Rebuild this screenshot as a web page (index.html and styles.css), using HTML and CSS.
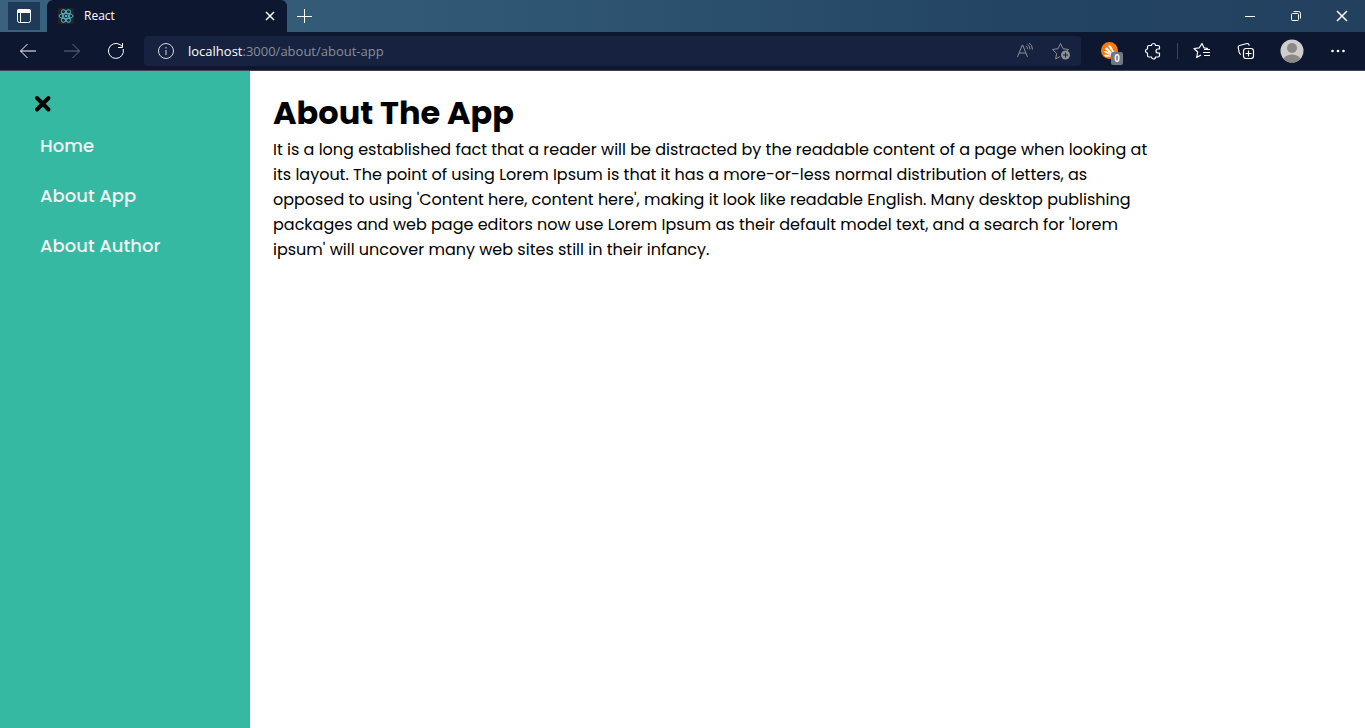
FILE: index.html
```html
<!DOCTYPE html>
<html lang="en">
<head>
<meta charset="utf-8">
<meta name="viewport" content="width=device-width, initial-scale=1">
<title>React</title>
<link rel="stylesheet" href="styles.css">
</head>
<body>
<div class="browser">
  <header class="chrome">
    <div class="titlebar">
      <button class="tab-actions" aria-label="Tab actions menu">
        <svg class="icon" width="16" height="16" viewBox="0 0 16 16"><rect x="1.5" y="1.5" width="13" height="13" rx="2"/><path class="solid" d="M1 5V3a2 2 0 0 1 2-2h10a2 2 0 0 1 2 2v2z"/><path d="M4.5 5v9.500"/></svg>
      </button>
      <div class="tab">
        <svg class="favicon" width="16" height="16" viewBox="0 0 16 16"><rect width="16" height="16" rx="1"/><g class="atom"><ellipse cx="8" cy="8" rx="7" ry="2.700"/><ellipse cx="8" cy="8" rx="7" ry="2.700" transform="rotate(60 8 8)"/><ellipse cx="8" cy="8" rx="7" ry="2.700" transform="rotate(120 8 8)"/></g><circle class="nucleus" cx="8" cy="8" r="1.300"/></svg>
        <span class="tab-title">React</span>
        <button class="tab-close" aria-label="Close tab"><svg class="icon" width="10" height="10" viewBox="0 0 10 10"><path class="bold" d="M1 1l8 8M9 1L1 9"/></svg></button>
      </div>
      <button class="new-tab" aria-label="New tab"><svg class="icon" width="16" height="16" viewBox="0 0 16 16"><path d="M7.500 1v14M0 8.500h15"/></svg></button>
      <div class="window-controls">
        <button class="window-button" aria-label="Minimize"><svg class="icon" width="12" height="12" viewBox="0 0 12 12"><path d="M1 6.500h10"/></svg></button>
        <button class="window-button" aria-label="Restore"><svg class="icon" width="12" height="12" viewBox="0 0 12 12"><rect x="1.500" y="3.500" width="7" height="7" rx="1"/><path d="M3.500 1.500h5a2 2 0 0 1 2 2v5"/></svg></button>
        <button class="window-button" aria-label="Close"><svg class="icon" width="12" height="12" viewBox="0 0 12 12"><path class="bold" d="M1 1l10 10M11 1L1 11"/></svg></button>
      </div>
    </div>
    <div class="toolbar">
      <button class="tool" aria-label="Back"><svg class="icon" width="18" height="16" viewBox="0 0 18 16"><path d="M8.500 1l-7 7 7 7M1.500 8H17"/></svg></button>
      <button class="tool dim" aria-label="Forward"><svg class="icon" width="18" height="16" viewBox="0 0 18 16"><path d="M9.500 1l7 7-7 7M16.500 8H1"/></svg></button>
      <button class="tool" aria-label="Refresh"><svg class="icon" width="18" height="18" viewBox="0 0 18 18"><path d="M16.200 7A7.500 7.500 0 1 1 13 2.600l2.500 2M15.500 1v4.500H11"/></svg></button>
      <div class="address">
        <button class="site-info" aria-label="Site information"><svg class="icon" width="18" height="18" viewBox="0 0 18 18"><circle cx="9" cy="9" r="7.500"/><path d="M9 8v5M9 5v1.500"/></svg></button>
        <div class="url"><span class="host">localhost</span>:3000/about/about-app</div>
        <button class="address-action" aria-label="Read aloud"><svg class="icon" width="18" height="18" viewBox="0 0 18 18"><path d="M1.500 15L6.300 3h.4L11.500 15M3 11h7M10 4q1.500 1 1.500 3M11.500 2.500Q14 4 14 7.500M13 1q3.500 2 3.500 6.500"/></svg></button>
        <button class="address-action" aria-label="Add to favorites"><svg class="icon" width="20" height="20" viewBox="0 0 20 20"><path d="M9 15.500l-4.300 2.500.9-5.500-4-4 5.500-.8L9.500 2.500 12 7.700l5.500.8-1.500 1.500"/><circle class="solid" cx="14.500" cy="14" r="4.500"/><path class="cut" d="M14.500 11.500v5M12 14h5"/></svg></button>
      </div>
      <button class="tool extension" aria-label="Avast extension, 0">
        <svg width="18" height="18" viewBox="0 0 18 18"><circle cx="8.500" cy="8.500" r="8.500" fill="#f77a0b"/><path fill="#fff" d="M7 4q1.500-1.500 3 0l4 7.500-1 1zM4 7q.5-1.800 2.300-1.300l6.200 6.800-1 .8zM3 10q.5-1.500 2-1l6 3.500-.8 1.300zM3.500 12.500l4.500.5 2 1.500-5.500.2q-1.500-.7-1-2.200z"/></svg>
        <span class="count">0</span>
      </button>
      <button class="tool" aria-label="Extensions"><svg class="icon" width="18" height="18" viewBox="0 0 18 18"><path class="medium" d="M5 3.500h2.500a2 2 0 0 1 4 0H14q1.500 0 1.500 1.500v2H14a2 2 0 0 0 0 4h1.500v2.500q0 1.500-1.500 1.500h-2.500a2 2 0 0 1-4 0H5q-1.500 0-1.500-1.500V11a2 2 0 0 1 0-4V5q0-1.500 1.500-1.500z"/></svg></button>
      <span class="divider"></span>
      <button class="tool" aria-label="Favorites"><svg class="icon" width="18" height="18" viewBox="0 0 18 18"><path class="medium" d="M8 13l-4.300 2.500 1-5.500L1 6.500l5.300-.7L9 1.500l2 4.300 4 .7"/><path class="medium" d="M11 7.500h6M10 10.500h7M11 13.500h6"/></svg></button>
      <button class="tool" aria-label="Collections"><svg class="icon" width="18" height="18" viewBox="0 0 18 18"><path class="medium" d="M4 12.500q-1.500-.5-1.800-2L1.200 5.500Q1 4 2.500 3.500l7.500-2q1.800-.2 2.300 2"/><rect class="medium" x="6.500" y="6.500" width="10" height="10" rx="2.500"/><path class="medium" d="M11.500 8.500v6M8.500 11.500h6"/></svg></button>
      <button class="tool profile" aria-label="Profile"><svg width="24" height="24" viewBox="0 0 24 24"><clipPath id="avatar"><circle cx="12" cy="12" r="11.500"/></clipPath><g clip-path="url(#avatar)"><path fill="#d0cecc" d="M0 0h24v24H0z"/><circle cx="12" cy="9" r="5" fill="#8b8886"/><ellipse cx="12" cy="21" rx="8.500" ry="5.500" fill="#8b8886"/></g></svg></button>
      <button class="tool" aria-label="Settings and more"><svg class="icon" width="16" height="16" viewBox="0 0 16 16"><g class="solid"><circle cx="2.500" cy="8" r="1.300"/><circle cx="8" cy="8" r="1.300"/><circle cx="13.500" cy="8" r="1.300"/></g></svg></button>
    </div>
  </header>
  <div class="app">
    <aside class="sidebar">
      <button class="menu-close" aria-label="Close menu"><svg width="18" height="18" viewBox="0 0 18 18"><path d="M3 3l11.500 11.500M14.500 3L3 14.500"/></svg></button>
      <nav class="menu">
        <a class="menu-link" href="#home">Home</a>
        <a class="menu-link" href="#about-app">About App</a>
        <a class="menu-link" href="#about-author">About Author</a>
      </nav>
    </aside>
    <main class="content">
      <h1 class="title">About The App</h1>
      <p class="description">It is a long established fact that a reader will be distracted by the readable content of a page when looking at its layout. The point of using Lorem Ipsum is that it has a more-or-less normal distribution of letters, as opposed to using 'Content here, content here', making it look like readable English. Many desktop publishing packages and web page editors now use Lorem Ipsum as their default model text, and a search for 'lorem ipsum' will uncover many web sites still in their infancy.</p>
    </main>
  </div>
</div>
</body>
</html>
```
FILE: styles.css
```css
* { box-sizing: border-box; }
body { margin: 0; background: #fff; color: #000; font-family: Poppins, Inter, sans-serif; }
button { display: flex; align-items: center; justify-content: center; flex: none; margin: 0; padding: 0; border: 0; background: none; color: inherit; }
svg { display: block; flex: none; }

.browser { display: flex; flex-direction: column; min-height: 100vh; }
.chrome { color: #fff; background: #0e1730; border-bottom: 1px solid #3f4555; font-family: "Segoe UI", "Open Sans", sans-serif; }
.titlebar { display: flex; align-items: center; height: 32px; padding-left: 8px; background: linear-gradient(90deg, #3a627f, #305874 35%, #234463 75%, #23415f); }
.tab-actions { width: 32px; height: 28px; background: #1f3a59; }
.tab { display: flex; align-items: center; align-self: stretch; width: 240px; margin-left: 7px; padding: 0 6px 0 11px; background: #0e1730; border-radius: 6px 6px 0 0; }
.favicon { fill: #222426; }
.atom { fill: none; stroke: #53b5cd; stroke-width: 1; }
.nucleus { fill: #53b5cd; }
.tab-title { flex: 1; margin-left: 10px; font-size: 12px; line-height: 16px; }
.tab-close { width: 22px; height: 22px; }
.new-tab { width: 36px; height: 32px; }
.window-controls { display: flex; align-self: stretch; margin-left: auto; }
.window-button { width: 46px; }

.toolbar { display: flex; align-items: center; height: 38px; padding: 0 5px 0 6px; }
.tool { width: 44px; height: 36px; }
.icon { fill: none; stroke: currentColor; stroke-width: 1; stroke-linejoin: round; }
.icon .solid { fill: currentColor; stroke: none; }
.icon .medium { stroke-width: 1.2; }
.icon .bold { stroke-width: 1.5; }
.icon .cut { stroke: #16223f; stroke-width: 1; }
.dim { color: #686d7c; }
.address { display: flex; align-items: center; flex: 1; min-width: 0; height: 30px; margin: 0 8px 0 6px; padding: 0 2px 0 4px; background: #16223f; border-radius: 4px; }
.site-info { width: 36px; height: 30px; color: #d5d8df; }
.url { flex: 1; min-width: 0; margin-left: 4px; overflow: hidden; color: #8b8f96; font-size: 13px; line-height: 20px; white-space: nowrap; }
.host { color: #fff; }
.address-action { width: 36px; height: 30px; color: #8e8f93; }
.extension { position: relative; width: 42px; }
.count { position: absolute; right: 8px; bottom: 4px; width: 12px; height: 13px; background: #737783; border-radius: 2px; font-size: 10px; font-weight: 700; line-height: 13px; text-align: center; }
.divider { width: 1px; height: 16px; margin: 0 2px; background: #3d465e; }
.profile { width: 48px; }

.app { display: flex; flex: 1; }
.sidebar { flex: none; width: 250px; padding: 20px 34px; background: #36b9a3; }
.menu-close { width: 18px; height: 26px; }
.menu-close svg { fill: none; stroke: #000; stroke-width: 4; stroke-linecap: round; }
.menu { display: flex; flex-direction: column; margin-top: 4px; }
.menu-link { padding: 12px 6px; color: #f1f1f1; font-size: 18px; font-weight: 500; line-height: 26px; text-decoration: none; }
.content { flex: 1; padding: 18px 23px; }
.title { margin: 0; font-size: 32px; font-weight: 700; line-height: 48px; }
.description { max-width: 880px; margin: 0; font-size: 16px; font-weight: 400; line-height: 25px; }
```
